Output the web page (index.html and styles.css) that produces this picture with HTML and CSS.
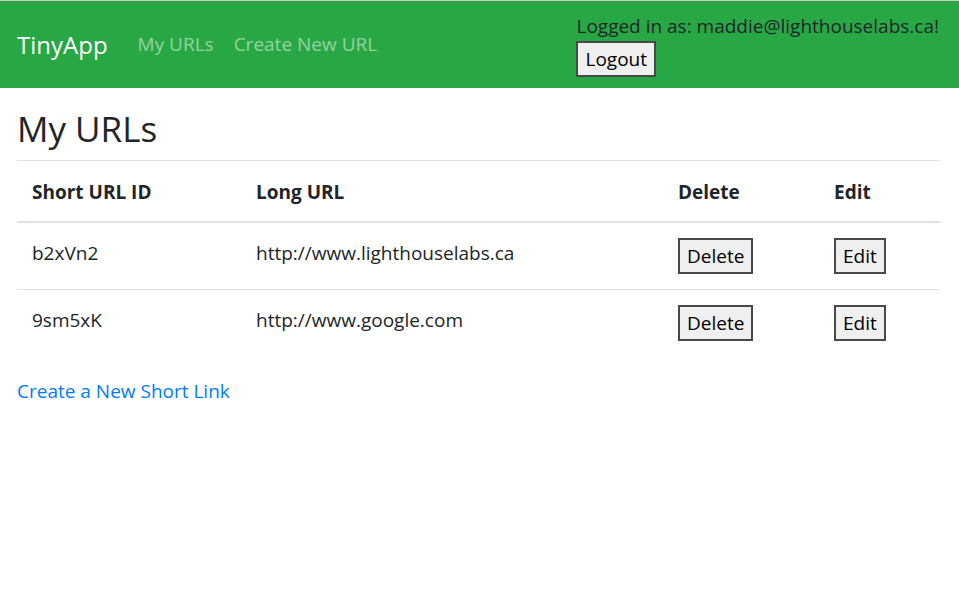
FILE: index.html
```html
<!DOCTYPE html>
<html lang="en">
<head>
<meta charset="utf-8">
<title>TinyApp</title>
<link rel="stylesheet" href="styles.css">
</head>
<body>
<nav class="navbar">
  <a class="brand" href="#">TinyApp</a>
  <div class="nav-links">
    <a class="nav-link" href="#">My URLs</a>
    <a class="nav-link" href="#">Create New URL</a>
  </div>
  <div class="user">
    <div class="user-text">Logged in as: maddie@lighthouselabs.ca!</div>
    <form class="logout-form"><button type="button" class="btn">Logout</button></form>
  </div>
</nav>
<main class="content">
  <h1 class="title">My URLs</h1>
  <table class="table">
    <thead>
      <tr>
        <th class="col-id">Short URL ID</th>
        <th class="col-long">Long URL</th>
        <th class="col-del">Delete</th>
        <th class="col-edit">Edit</th>
      </tr>
    </thead>
    <tbody>
      <tr>
        <td>b2xVn2</td>
        <td>http://www.lighthouselabs.ca</td>
        <td><button type="button" class="btn">Delete</button></td>
        <td><button type="button" class="btn">Edit</button></td>
      </tr>
      <tr>
        <td>9sm5xK</td>
        <td>http://www.google.com</td>
        <td><button type="button" class="btn">Delete</button></td>
        <td><button type="button" class="btn">Edit</button></td>
      </tr>
    </tbody>
  </table>
  <a class="create-link" href="#">Create a New Short Link</a>
</main>
</body>
</html>
```

FILE: styles.css
```css
* { box-sizing: border-box; }

html, body { margin: 0; padding: 0; }

body {
  font-family: "Open Sans", "Noto Sans", sans-serif;
  font-size: 19px;
  line-height: 30px;
  color: #212529;
  background: #fff;
  border-top: 1px solid #cdcdcd;
}

a { text-decoration: none; }

.navbar {
  display: flex;
  align-items: center;
  background: #28a745;
  padding: 10px 20px 11px 17px;
}

.brand {
  color: #fff;
  font-size: 24px;
  line-height: 37px;
  margin-right: 20px;
}

.nav-links { display: flex; }

.nav-link {
  color: rgba(255, 255, 255, 0.5);
  padding: 0 10px;
}

.user { margin-left: auto; }

.logout-form { margin: 0; }

.btn {
  font-family: inherit;
  font-size: 19px;
  line-height: 30px;
  color: #000;
  background: #efefef;
  border: 2px solid #484848;
  border-radius: 0;
  padding: 1px 7px;
  margin: 0;
}

.content {
  padding: 0 19px 0 17px;
}

.title {
  font-size: 35px;
  line-height: 42px;
  font-weight: 500;
  margin: 20px 0 10px;
}

.table {
  width: 100%;
  border-collapse: collapse;
  margin-bottom: 20px;
}

.table th,
.table td {
  padding: 15px;
  text-align: left;
  vertical-align: top;
  border-top: 1px solid #dee2e6;
}

.table thead th {
  font-weight: 700;
  border-bottom: 2px solid #dee2e6;
  padding-top: 16px;
  padding-bottom: 14px;
}

.col-id { width: 224px; }
.col-long { width: 422px; }
.col-del { width: 156px; }
.col-edit { width: 121px; }

.create-link {
  color: #007bff;
}
```
